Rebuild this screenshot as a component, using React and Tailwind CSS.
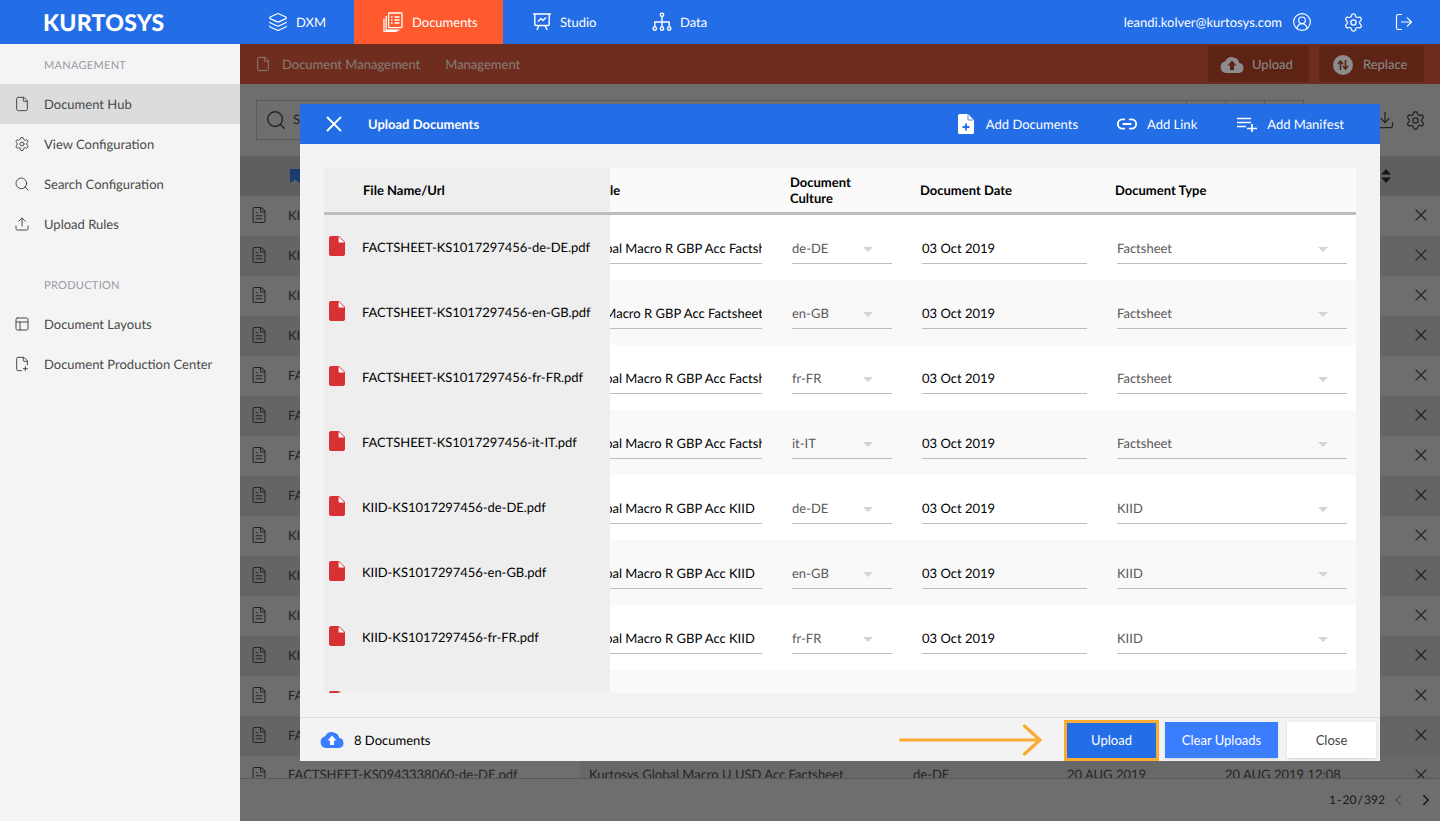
import {
  ChevronLeft,
  ChevronRight,
  CircleUserRound,
  Download,
  File,
  FilePlus2,
  FileText,
  Layers,
  Link2,
  LogOut,
  PanelsTopLeft,
  Search,
  Settings,
  Upload,
  X,
} from "lucide-react";

const PdfIcon = ({ className }) => (
  <svg viewBox="4 2 16 20" className={className}>
    <path d="M6 2c-1.1 0-2 .9-2 2v16c0 1.1.9 2 2 2h12c1.1 0 2-.9 2-2V8l-6-6H6z" fill="#d93036" />
    <path d="M13.6 2.6V8.4H19.4z" fill="#fff" />
  </svg>
);

const CloudIcon = ({ color, arrow }) => (
  <svg viewBox="0 0 24 16" className="w-6 h-4">
    <path d="M19.3 6.1A7.5 7.5 0 0 0 5.3 4.2 6 6 0 0 0 6 16h13a5 5 0 0 0 .3-9.9z" fill={color} />
    <path d="M12 3.5l4.5 5H14V13h-4V8.5H7.5z" fill={arrow} />
  </svg>
);

const DocumentsIcon = () => (
  <svg viewBox="0 0 20 20" className="size-5" fill="none" stroke="#fff" strokeWidth="1.3">
    <rect x="5.6" y="1" width="13.4" height="14.6" rx="0.8" />
    <path d="M3.2 4v13.4a0.8 0.8 0 0 0 .8.8h12.4M1 6.5v13h13" />
    <path d="M8 5h1.6M8 8h1.6M8 11h1.6M11.5 5h5M11.5 8h5M11.5 11h5" />
  </svg>
);

const StudioIcon = () => (
  <svg viewBox="0 0 20 20" className="size-5" fill="none" stroke="#fff" strokeWidth="1.4">
    <path d="M1 2h18M2.8 2v10.5a1 1 0 0 0 1 1h12.4a1 1 0 0 0 1-1V2" />
    <path d="M6 9.5l3-3 2 2 3-3M7 13.5L4.8 18M13 13.5l2.2 4.5" />
  </svg>
);

const DataIcon = () => (
  <svg viewBox="0 0 20 20" className="size-5" fill="none" stroke="#fff" strokeWidth="1.4">
    <circle cx="10" cy="2.8" r="1.7" />
    <circle cx="2.8" cy="16.6" r="1.7" />
    <circle cx="10" cy="16.6" r="1.7" />
    <circle cx="17.2" cy="16.6" r="1.7" />
    <path d="M10 4.5v10.4M2.8 14.9V10h14.4v4.9" />
  </svg>
);

const AddManifestIcon = () => (
  <svg viewBox="0 0 22 16" className="w-[22px] h-4" stroke="#fff" strokeWidth="1.7" fill="none">
    <path d="M1 2.5h14M1 6.5h14M1 10.5h9M11 12.5h10M16 8v8" />
  </svg>
);

const ReplaceIcon = () => (
  <svg viewBox="0 0 20 20" className="size-5">
    <circle cx="10" cy="10" r="10" fill="#8c8c8c" />
    <path d="M7.5 15V7M5 9l2.5-3L10 9M12.5 5v8M10 11l2.5 3 2.5-3" fill="none" stroke="#5d2416" strokeWidth="1.6" />
  </svg>
);

const SortIcon = () => (
  <svg viewBox="0 0 10 14" className="w-[10px] h-[14px]" fill="#333">
    <path d="M5 0l5 5.5H0zM5 14L0 8.5h10z" />
  </svg>
);

const navGroups = [
  {
    title: "MANAGEMENT",
    items: [
      { label: "Document Hub", icon: File, active: true },
      { label: "View Configuration", icon: Settings },
      { label: "Search Configuration", icon: Search },
      { label: "Upload Rules", icon: Upload },
    ],
  },
  {
    title: "PRODUCTION",
    items: [
      { label: "Document Layouts", icon: PanelsTopLeft },
      { label: "Document Production Center", icon: FilePlus2 },
    ],
  },
];

const bgRows = ["KI", "KI", "KI", "KI", "FA", "FA", "FA", "FA", "KI", "KI", "KI", "KI", "FA", "FA"];

const uploads = [
  { file: "FACTSHEET-KS1017297456-de-DE.pdf", title: "Kurtosys Global Macro R GBP Acc Factsheet", shift: "-ml-[78px]", culture: "de-DE", type: "Factsheet" },
  { file: "FACTSHEET-KS1017297456-en-GB.pdf", title: "Kurtosys Global Macro R GBP Acc Factsheet", shift: "-ml-[99px]", culture: "en-GB", type: "Factsheet" },
  { file: "FACTSHEET-KS1017297456-fr-FR.pdf", title: "Kurtosys Global Macro R GBP Acc Factsheet", shift: "-ml-[78px]", culture: "fr-FR", type: "Factsheet" },
  { file: "FACTSHEET-KS1017297456-it-IT.pdf", title: "Kurtosys Global Macro R GBP Acc Factsheet", shift: "-ml-[78px]", culture: "it-IT", type: "Factsheet" },
  { file: "KIID-KS1017297456-de-DE.pdf", title: "Kurtosys Global Macro R GBP Acc KIID", shift: "-ml-[78px]", culture: "de-DE", type: "KIID" },
  { file: "KIID-KS1017297456-en-GB.pdf", title: "Kurtosys Global Macro R GBP Acc KIID", shift: "-ml-[78px]", culture: "en-GB", type: "KIID" },
  { file: "KIID-KS1017297456-fr-FR.pdf", title: "Kurtosys Global Macro R GBP Acc KIID", shift: "-ml-[78px]", culture: "fr-FR", type: "KIID" },
];

const Caret = () => (
  <span className="w-0 h-0 border-x-[5px] border-x-transparent border-t-[5px] border-t-[#d4d4d4]" />
);

const TopNav = () => (
  <header className="flex h-11 bg-[#236de6] text-white text-[13px]">
    <div className="w-[268px] pl-[43px] flex items-center">
      <span className="text-[23px] leading-none font-black tracking-[0.3px]">KURTOSYS</span>
    </div>
    <div className="w-[86px] flex items-center gap-2">
      <Layers size={20} strokeWidth={1.4} />
      <span className="pt-[2px]">DXM</span>
    </div>
    <div className="w-[149px] bg-[#ff5a2d] flex items-center pl-[29px] gap-[9px]">
      <DocumentsIcon />
      <span className="pt-[2px]">Documents</span>
    </div>
    <div className="w-[149px] flex items-center pl-[29px] gap-2">
      <StudioIcon />
      <span className="pt-[2px]">Studio</span>
    </div>
    <div className="flex items-center gap-2">
      <DataIcon />
      <span className="pt-[2px]">Data</span>
    </div>
    <div className="ml-auto flex items-center pr-[26px]">
      <span className="pt-[2px]">leandi.kolver@kurtosys.com</span>
      <CircleUserRound size={20} strokeWidth={1.4} className="ml-[10px]" />
      <Settings size={21} strokeWidth={1.4} className="ml-[31px]" />
      <LogOut size={20} strokeWidth={1.4} className="ml-[30px]" />
    </div>
  </header>
);

const Sidebar = () => (
  <aside className="w-60 shrink-0 bg-[#f4f4f4] text-[13px] text-[#4a4a4a]">
    {navGroups.map((group) => (
      <div key={group.title} className="pb-5">
        <div className="h-10 flex items-center pl-11 pt-1 text-[11px] text-[#9a9aa5] tracking-[0.3px]">{group.title}</div>
        {group.items.map((item) => (
          <div key={item.label} className={`h-10 flex items-center pl-[14px] gap-[14px] ${item.active ? "bg-[#dcdcdc]" : ""}`}>
            <item.icon size={16} strokeWidth={1.5} />
            <span className="pt-[2px]">{item.label}</span>
          </div>
        ))}
      </div>
    ))}
  </aside>
);

const BackgroundPage = () => (
  <main className="relative flex-1 flex flex-col bg-white overflow-hidden text-[13px] text-[#555]">
    <div className="h-10 shrink-0 bg-[#ff6946] flex items-center pl-[15px] text-[#8a7d77]">
      <span className="relative z-30 flex items-center pt-[2px]">
        <File size={16} strokeWidth={1.5} className="-mt-[2px]" />
        <span className="ml-[11px]">Document Management</span>
        <span className="ml-[25px]">Management</span>
      </span>
      <div className="relative z-30 ml-auto flex gap-[10px] pr-4 h-9 text-[#8c8c8c]">
        <span className="w-[101px] bg-[#5d2416] flex items-center gap-2 pl-3 pt-[2px]">
          <CloudIcon color="#8c8c8c" arrow="#5d2416" />
          Upload
        </span>
        <span className="w-[105px] bg-[#5d2416] flex items-center gap-[10px] pl-[14px] pt-[2px]">
          <ReplaceIcon />
          Replace
        </span>
      </div>
    </div>
    <div className="h-[72px] shrink-0 flex items-center pl-4 pr-[14px]">
      <div className="h-10 w-[931px] border border-[#d0d0d0] flex items-center pl-2 gap-[6px]">
        <Search size={22} strokeWidth={1.6} />
        <span>Search</span>
      </div>
      <div className="h-10 w-[39px] border border-l-0 border-[#d0d0d0]" />
      <div className="h-10 w-[39px] border border-l-0 border-[#d0d0d0]" />
      <div className="h-10 w-[39px] border border-l-0 border-[#d0d0d0]" />
      <div className="ml-auto flex items-center gap-[10px]">
        <Download size={20} strokeWidth={1.5} />
        <Settings size={21} strokeWidth={1.5} />
      </div>
    </div>
    <div className="h-10 shrink-0 bg-[#dddddd] flex items-center pl-[50px] pr-[49px]">
      <svg viewBox="0 0 10 14" className="w-[10px] h-[14px]" fill="#3a8cff">
        <path d="M0 0h10v14L5 10.5 0 14z" />
      </svg>
      <span className="ml-auto">
        <SortIcon />
      </span>
    </div>
    <div className="flex-1 overflow-hidden">
      {bgRows.map((text, i) => (
        <div key={i} className={`h-10 flex items-center pb-[2px] pl-[10px] pr-[9px] ${i % 2 ? "bg-[#ebebeb]" : "bg-white"}`}>
          <FileText size={18} strokeWidth={1.4} />
          <span className="ml-5 pt-[2px]">{text}</span>
          <X size={20} strokeWidth={1.4} className="ml-auto" />
        </div>
      ))}
      <div className="h-10 flex items-center whitespace-nowrap">
        <div className="w-[340px] h-full shrink-0 bg-white flex items-center pb-[2px] pl-[10px]">
          <FileText size={18} strokeWidth={1.4} />
          <span className="ml-5">FACTSHEET-KS0943338060-de-DE.pdf</span>
        </div>
        <div className="flex-1 h-full bg-[#f2f2f2] flex items-center pb-[2px] pl-[9px] pr-[9px]">
          <span className="w-[324px]">Kurtosys Global Macro U USD Acc Factsheet</span>
          <span className="w-[154px]">de-DE</span>
          <span className="w-[158px]">20 AUG 2019</span>
          <span>20 AUG 2019 12:08</span>
          <X size={20} strokeWidth={1.4} className="ml-auto" />
        </div>
      </div>
    </div>
    <div className="absolute inset-x-0 bottom-0 h-[43px] bg-white border-t border-[#cfcfcf] flex items-center justify-end pr-[5px] text-[12px] z-10">
      <span className="text-[#3d3d3d] [word-spacing:-2px]">1 - 20 / 392</span>
      <ChevronLeft size={18} className="ml-[4px] text-[#bbb]" />
      <ChevronRight size={18} className="ml-[10px] text-[#333]" />
    </div>
  </main>
);

const UploadRow = ({ row, index }) => (
  <div className={`flex h-[65px] ${index % 2 ? "bg-[#f9f9f9]" : "bg-white"}`}>
    <div className="w-[286px] shrink-0 bg-[#eeeeee] flex items-center pl-[5px] text-black">
      <PdfIcon className="w-4 h-5 -mt-[3px]" />
      <span className="ml-[17px] tracking-[-0.05px]">{row.file}</span>
    </div>
    <div className="w-[180px] shrink-0 flex items-center">
      <div className="w-[152px] h-[31px] mt-[2px] pt-[2px] overflow-hidden border-b border-[#bdbdbd] flex items-center whitespace-nowrap text-black">
        <span className={`shrink-0 ${row.shift}`}>{row.title}</span>
      </div>
    </div>
    <div className="w-[130px] shrink-0 pl-[2px] flex items-center">
      <div className="w-[100px] h-[31px] mt-[2px] pt-[2px] border-b border-[#bdbdbd] flex items-center justify-between pr-[19px] text-[#5a5a5a]">
        {row.culture}
        <Caret />
      </div>
    </div>
    <div className="w-[195px] shrink-0 pl-[2px] flex items-center">
      <div className="w-[165px] h-[31px] mt-[2px] pt-[2px] border-b border-[#bdbdbd] flex items-center text-black">03 Oct 2019</div>
    </div>
    <div className="w-[232px] shrink-0 pl-[2px] flex items-center">
      <div className="w-[230px] h-[31px] mt-[2px] pt-[2px] border-b border-[#bdbdbd] flex items-center justify-between pr-[19px] text-[#5a5a5a]">
        {row.type}
        <Caret />
      </div>
    </div>
  </div>
);

const UploadModal = () => (
  <div className="absolute left-[300px] top-[104px] w-[1080px] h-[657px] bg-[#f3f3f3] flex flex-col z-30 text-[13px]">
    <div className="h-10 shrink-0 bg-[#236de6] text-white flex items-center pl-[21px] pr-9">
      <X size={26} strokeWidth={1.7} />
      <span className="ml-[21px] pt-[2px] font-bold">Upload Documents</span>
      <div className="ml-auto flex items-center">
        <svg viewBox="0 0 16 20" className="w-4 h-5">
          <path d="M1.5 0H10l6 6v12.5a1.5 1.5 0 0 1-1.5 1.5h-13A1.5 1.5 0 0 1 0 18.5v-17A1.5 1.5 0 0 1 1.5 0z" fill="#fff" />
          <path d="M10 .8V6h5.2" fill="none" stroke="#236de6" strokeWidth="0.8" />
          <path d="M8 9.5v7M4.5 13h7" stroke="#236de6" strokeWidth="1.8" />
        </svg>
        <span className="ml-[12px] pt-[2px]">Add Documents</span>
        <Link2 size={22} strokeWidth={2} className="ml-[38px]" />
        <span className="ml-[9px] pt-[2px]">Add Link</span>
        <span className="ml-[39px] flex"><AddManifestIcon /></span>
        <span className="ml-[9px] pt-[2px]">Add Manifest</span>
      </div>
    </div>
    <div className="flex-1 min-h-0 px-6 pt-6 pb-6">
      <div className="h-[525px] overflow-hidden bg-white">
        <div className="flex h-[47px] bg-[#fafafa] border-b-[3px] border-[#bdbdbd] font-bold text-black leading-4">
          <div className="w-[286px] shrink-0 bg-[#eeeeee] pl-[39px] flex items-center">File Name/Url</div>
          <div className="w-[180px] shrink-0 flex items-center">le</div>
          <div className="w-[130px] shrink-0 flex items-center">Document<br />Culture</div>
          <div className="w-[195px] shrink-0 flex items-center">Document Date</div>
          <div className="flex items-center">Document Type</div>
        </div>
        {uploads.map((row, i) => (
          <UploadRow key={row.file} row={row} index={i} />
        ))}
        <div className="flex h-[65px] bg-[#f9f9f9]">
          <div className="w-[286px] bg-[#eeeeee] flex items-center pl-[5px]">
            <PdfIcon className="w-4 h-5 -mt-[3px]" />
          </div>
        </div>
      </div>
    </div>
    <div className="h-[44px] shrink-0 border-t border-[#dcdcdc] flex items-center pt-px pl-5 pr-1 text-black">
      <CloudIcon color="#3a7dff" arrow="#fff" />
      <span className="ml-[10px] pt-[2px]">8 Documents</span>
      <svg viewBox="0 0 143 32" className="ml-auto w-[143px] h-8" fill="none" stroke="#fbab33" strokeWidth="3.2" strokeLinecap="round">
        <path d="M1.6 16H140M125.5 2L141 16 125.5 30" />
      </svg>
      <button className="self-end ml-[22px] w-[95px] h-[41px] bg-[#236de6] border-[3px] border-[#fbab33] text-white">Upload</button>
      <button className="ml-[6px] w-[113px] h-9 pt-px bg-[#3a7dff] text-white shadow-sm">Clear Uploads</button>
      <button className="ml-[9px] w-[89px] h-9 pt-px bg-white text-[#444] shadow-sm">Close</button>
    </div>
  </div>
);

export default function App() {
  return (
    <div className="relative h-[821px] w-[1440px] overflow-hidden font-['Lato',sans-serif] bg-white [text-rendering:geometricPrecision]">
      <TopNav />
      <div className="flex h-[777px]">
        <Sidebar />
        <BackgroundPage />
      </div>
      <div className="absolute left-60 right-0 top-11 bottom-0 bg-black/[0.57] z-20" />
      <UploadModal />
    </div>
  );
}
